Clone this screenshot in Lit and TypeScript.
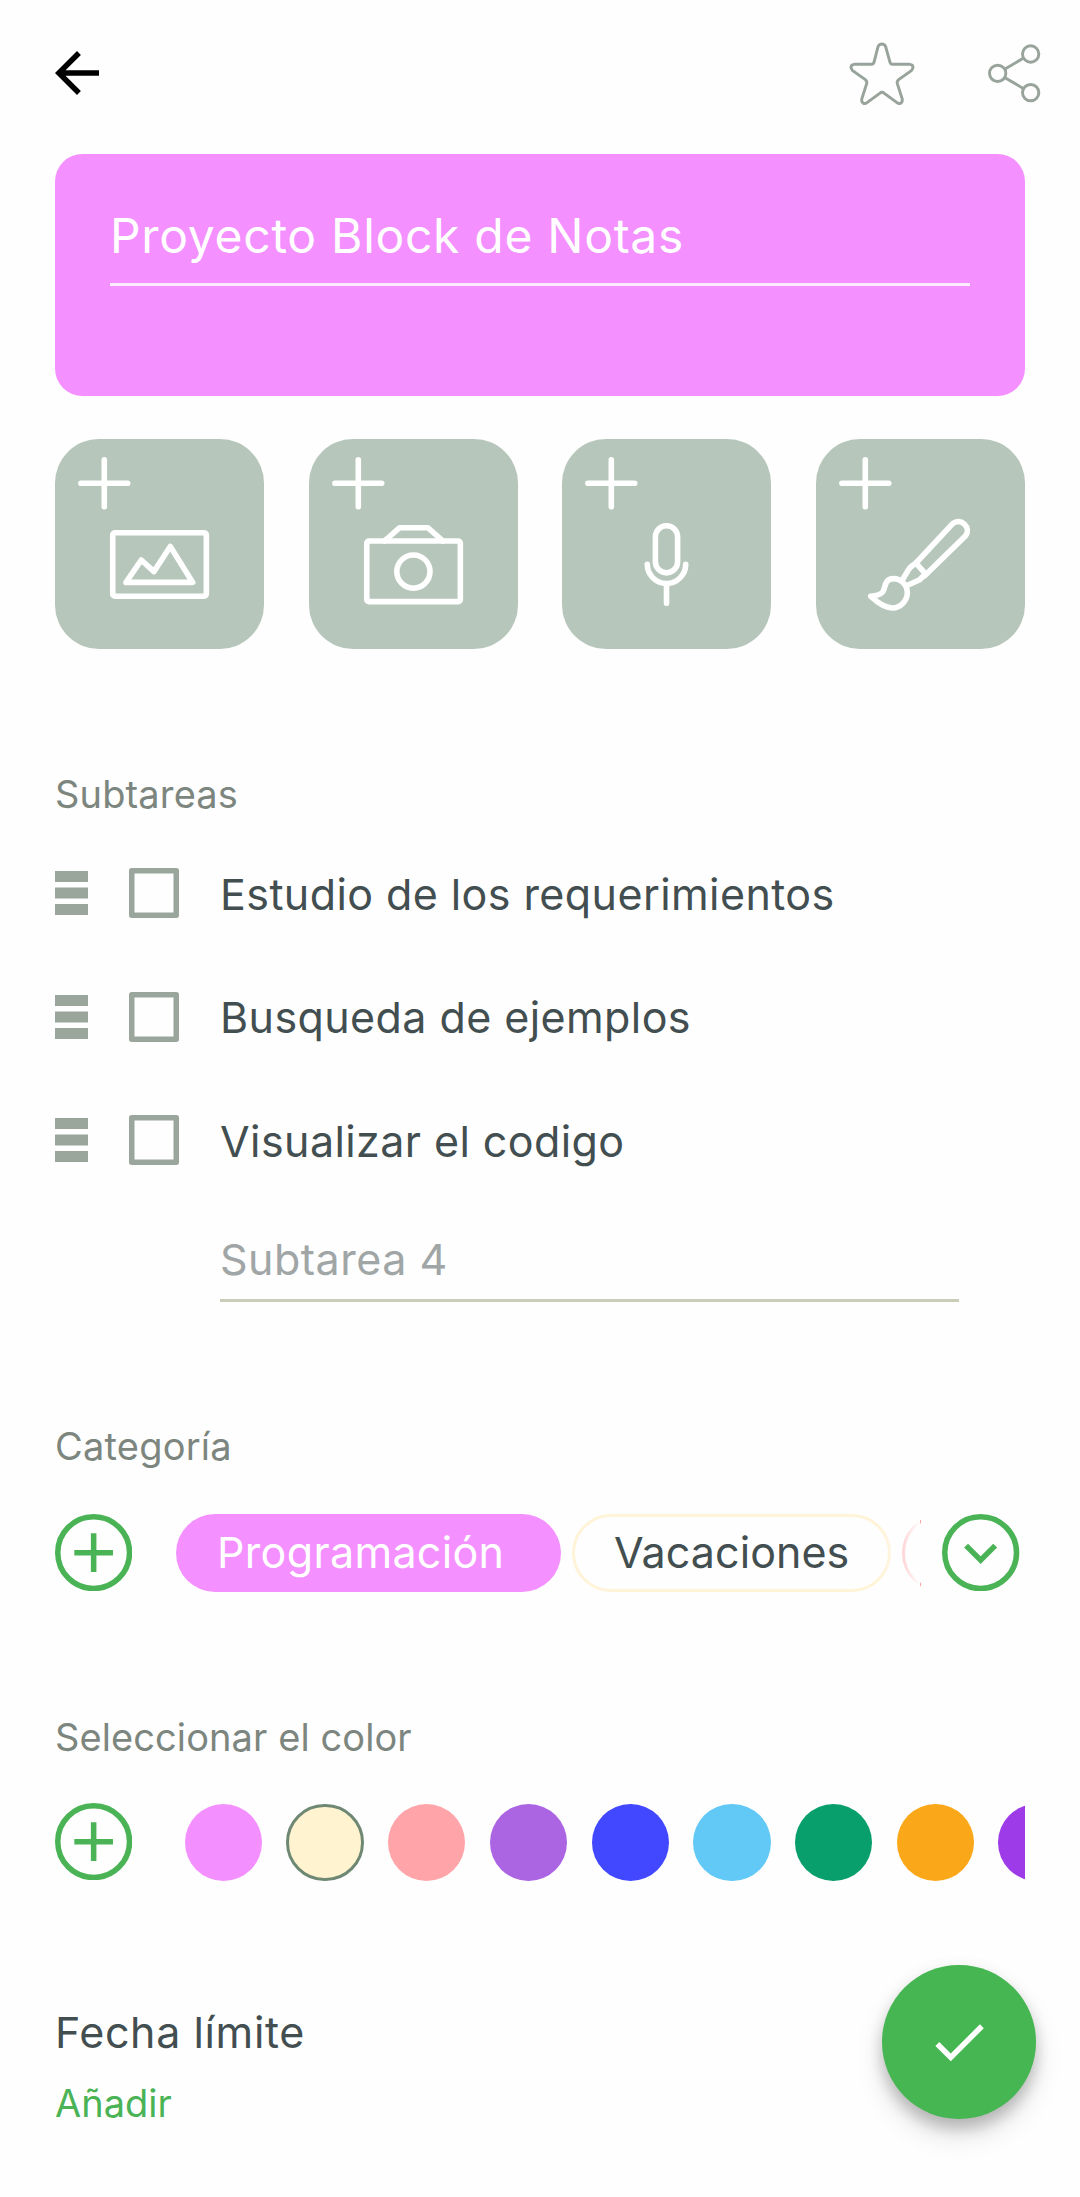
import { LitElement, html, css, svg } from "lit";
import { customElement } from "lit/decorators.js";

const plus = svg`<path d="M49.3 20.9v46.8M25.9 44.3h46.8"/>`;

const tiles = [
  { name: "imagen", art: svg`<rect x="57.75" y="93.75" width="93.6" height="63.5" rx="2.2"/><path d="M71 143.4 86.3 121l12.7 11.6 16.3-25.2 22.4 36z"/>` },
  { name: "camara", art: svg`<rect x="57.75" y="102" width="93.6" height="60.6" rx="2.2"/><path d="M75.5 102 90.7 88.7h28L134 102"/><circle cx="104.4" cy="132.6" r="16.6"/>` },
  { name: "audio", art: svg`<rect x="93.4" y="86.75" width="22.2" height="47.1" rx="11.1"/><path d="M85.3 125.3a19.2 19.2 0 0 0 38.4 0M104.5 144.5v19.8"/>` },
  { name: "dibujo", art: svg`<g transform="scale(.33333)" stroke-width="16.8"><path d="M300 372 410 254c24-20 58 12 38 37L326 410"/><path d="M300 372l25 29M300 372c-10 8-17 10-22 19l-17 29M326 407l-15 15-36 17"/><path d="M232 419c-25 0-24 24-30 37-6 14-27 14-38 16 16 15 41 35 65 35 26 0 45-24 45-46 0-24-19-42-42-42z"/></g>` },
];

const tasks = ["Estudio de los requerimientos", "Busqueda de ejemplos", "Visualizar el codigo"];

const colors = ["#f48fff", "#fff3d0", "#ffa5a9", "#ab65e3", "#4248ff", "#62c9f7", "#089f6c", "#faa819", "#9d3be9"];

const ringPlus = html`<svg class="ring" viewBox="0 0 77 77"><circle cx="38.5" cy="38.5" r="35.75"/><path d="M38.5 19.25v38.5M19.25 38.5h38.5"/></svg>`;

@customElement("app-root")
export class AppRoot extends LitElement {
  static styles = css`
    :host { display: block; }
    * { box-sizing: border-box; }
    svg { display: block; flex: none; }
    .page { position: relative; height: 2197px; padding: 0 55px; overflow: hidden; background: #fefefe; color: #424e50; font-family: Inter, "Liberation Sans", sans-serif; display: flex; flex-direction: column; }
    .header { height: 153.5px; flex: none; display: flex; align-items: flex-start; padding-top: 40px; margin: 0 -16.8px 0 -11px; }
    .back { width: 66px; height: 66px; }
    .star { width: 68px; height: 66px; margin: 0.7px 0 0 auto; }
    .share { width: 54.67px; height: 60.67px; margin: 2.6px 0 0 71.6px; }
    .outline { fill: none; stroke: #98a49b; stroke-width: 8.8; }
    .card { height: 242px; flex: none; background: #f490ff; border-radius: 27.5px; padding: 52px 55px 0; }
    .title { color: #fff; font-size: 48px; line-height: 60px; letter-spacing: 0.7px; padding-bottom: 17px; border-bottom: 3px solid #fdebff; white-space: nowrap; }
    .tiles { display: flex; justify-content: space-between; margin-top: 43.7px; }
    .tile { width: 209px; height: 209.5px; border-radius: 44px; background: #b6c6bb; }
    .tile svg { fill: none; stroke: #fff; stroke-width: 5.6; stroke-linecap: round; stroke-linejoin: round; }
    .label { color: #7c867f; font-size: 38px; line-height: 50px; letter-spacing: 0.15px; flex: none; white-space: nowrap; }
    .l1 { margin-top: 120.5px; }
    .l2 { margin-top: 119px; letter-spacing: 0.22px; }
    .l3 { margin-top: 120.4px; letter-spacing: 0.09px; }
    .tasks { margin-top: 12.3px; }
    .task { height: 123.6px; display: flex; align-items: center; font-size: 43px; letter-spacing: 0.42px; white-space: nowrap; }
    .task .name { padding-top: 1px; }
    .grip { width: 33px; height: 44px; fill: #9aa59c; }
    .box { width: 50px; height: 50px; margin: 0 41px; fill: none; stroke: #9aa59c; stroke-width: 5.5; stroke-linejoin: round; }
    .new { margin: 27px 66px 0 165px; height: 72.3px; flex: none; font-size: 43px; line-height: 60px; letter-spacing: 0.5px; color: #a0a5a6; border-bottom: 3px solid #cbcdb9; }
    .row { display: flex; align-items: center; height: 78px; flex: none; margin-top: 43px; }
    .ring { width: 77.3px; height: 77.3px; fill: none; stroke: #4ab355; stroke-width: 5.5; }
    .chips { position: relative; display: flex; gap: 11px; width: 744.7px; height: 78px; margin: 0 21.7px 0 43.7px; overflow: hidden; }
    .chips::after { content: ""; position: absolute; top: 0; right: 1px; width: 38px; height: 78px; background: linear-gradient(90deg, #fefefe00, #fefefe); }
    .chip { flex: none; height: 78px; line-height: 76px; border-radius: 39px; font-size: 43px; white-space: nowrap; padding-left: 41px; }
    .chip.on { width: 385px; background: #f490ff; color: #fff; letter-spacing: 0.33px; }
    .chip.vac { width: 319px; border: 3px solid #fff3d8; padding-left: 39px; line-height: 70px; letter-spacing: 0.07px; }
    .chip.next { width: 200px; border: 3px solid #ffa5a9; }
    .pick { margin-top: 40.8px; align-items: flex-start; }
    .swatches { display: flex; gap: 24.45px; flex: 1; height: 78.4px; padding-top: 1px; margin-left: 52.3px; overflow: hidden; }
    .swatch { width: 77.3px; height: 77.3px; border-radius: 50%; flex: none; }
    .swatch.sel { border: 3px solid #6e8873; }
    .due { margin-top: 121.2px; font-size: 43px; line-height: 60px; letter-spacing: 0.6px; }
    .add { margin-top: 16.3px; font-size: 38px; line-height: 50px; color: #4ab355; }
    .fab { position: absolute; left: 882px; top: 1965px; width: 154px; height: 154px; border-radius: 50%; background: #45b651; display: flex; align-items: center; justify-content: center; box-shadow: 0 10px 14px rgba(0,0,0,.16), 0 16px 28px rgba(0,0,0,.13), 0 3px 18px rgba(0,0,0,.05); }
    .fab svg { width: 66px; height: 66px; fill: #fff; }
  `;

  render() {
    return html`
      <div class="page">
        <div class="header">
          <svg class="back" viewBox="0 0 24 24"><path d="M20 11H7.83l5.59-5.59L12 4l-8 8 8 8 1.41-1.41L7.83 13H20v-2z"/></svg>
          <svg class="star outline" viewBox="54 62 204 198"><path d="M144 79Q148 71 156 71 164 71 167 79L180 126Q182 132 187 132L240 132Q249 133 249 141 249 146 244 151L206 178Q200 183 202 190L217 237Q218 244 213 248 207 252 201 247L163 219Q156 213 149 219L111 247Q105 252 99 248 94 244 95 237L110 190Q112 183 106 178L68 151Q63 146 63 141 63 133 72 132L125 132Q130 132 132 126Z"/></svg>
          <svg class="share outline" viewBox="470 68 164 182"><circle cx="502" cy="159" r="24.5"/><circle cx="601" cy="101" r="24.5"/><circle cx="601" cy="217" r="24.5"/><path d="M524 146l56-33M524 172l56 33"/></svg>
        </div>
        <div class="card"><div class="title">Proyecto Block de Notas</div></div>
        <div class="tiles">${tiles.map((t) => html`<div class="tile ${t.name}"><svg width="209" height="209">${plus}${t.art}</svg></div>`)}</div>
        <div class="label l1">Subtareas</div>
        <div class="tasks">
          ${tasks.map((t) => html`
            <div class="task">
              <svg class="grip" viewBox="0 0 33 44"><path d="M0 0h33v11H0zM0 16.5h33v11H0zM0 33h33v11H0z"/></svg>
              <svg class="box" viewBox="0 0 50 50"><path d="M2.75 2.75h44.5v44.5H2.75z"/></svg>
              <span class="name">${t}</span>
            </div>`)}
        </div>
        <div class="new">Subtarea 4</div>
        <div class="label l2">Categoría</div>
        <div class="row">
          ${ringPlus}
          <div class="chips"><div class="chip on">Programación</div><div class="chip vac">Vacaciones</div><div class="chip next"></div></div>
          <svg class="ring" viewBox="0 0 77 77"><circle cx="38.5" cy="38.5" r="35.75"/><path d="M24 31.5l14.5 14.5L53 31.5"/></svg>
        </div>
        <div class="label l3">Seleccionar el color</div>
        <div class="row pick">
          ${ringPlus}
          <div class="swatches">${colors.map((c, i) => html`<div class="swatch ${i === 1 ? "sel" : ""}" style="background-color:${c}"></div>`)}</div>
        </div>
        <div class="due">Fecha límite</div>
        <div class="add">Añadir</div>
        <div class="fab"><svg viewBox="0 0 24 24"><path d="M9 16.17 4.83 12l-1.42 1.41L9 19 21 7l-1.41-1.41z"/></svg></div>
      </div>
    `;
  }
}
